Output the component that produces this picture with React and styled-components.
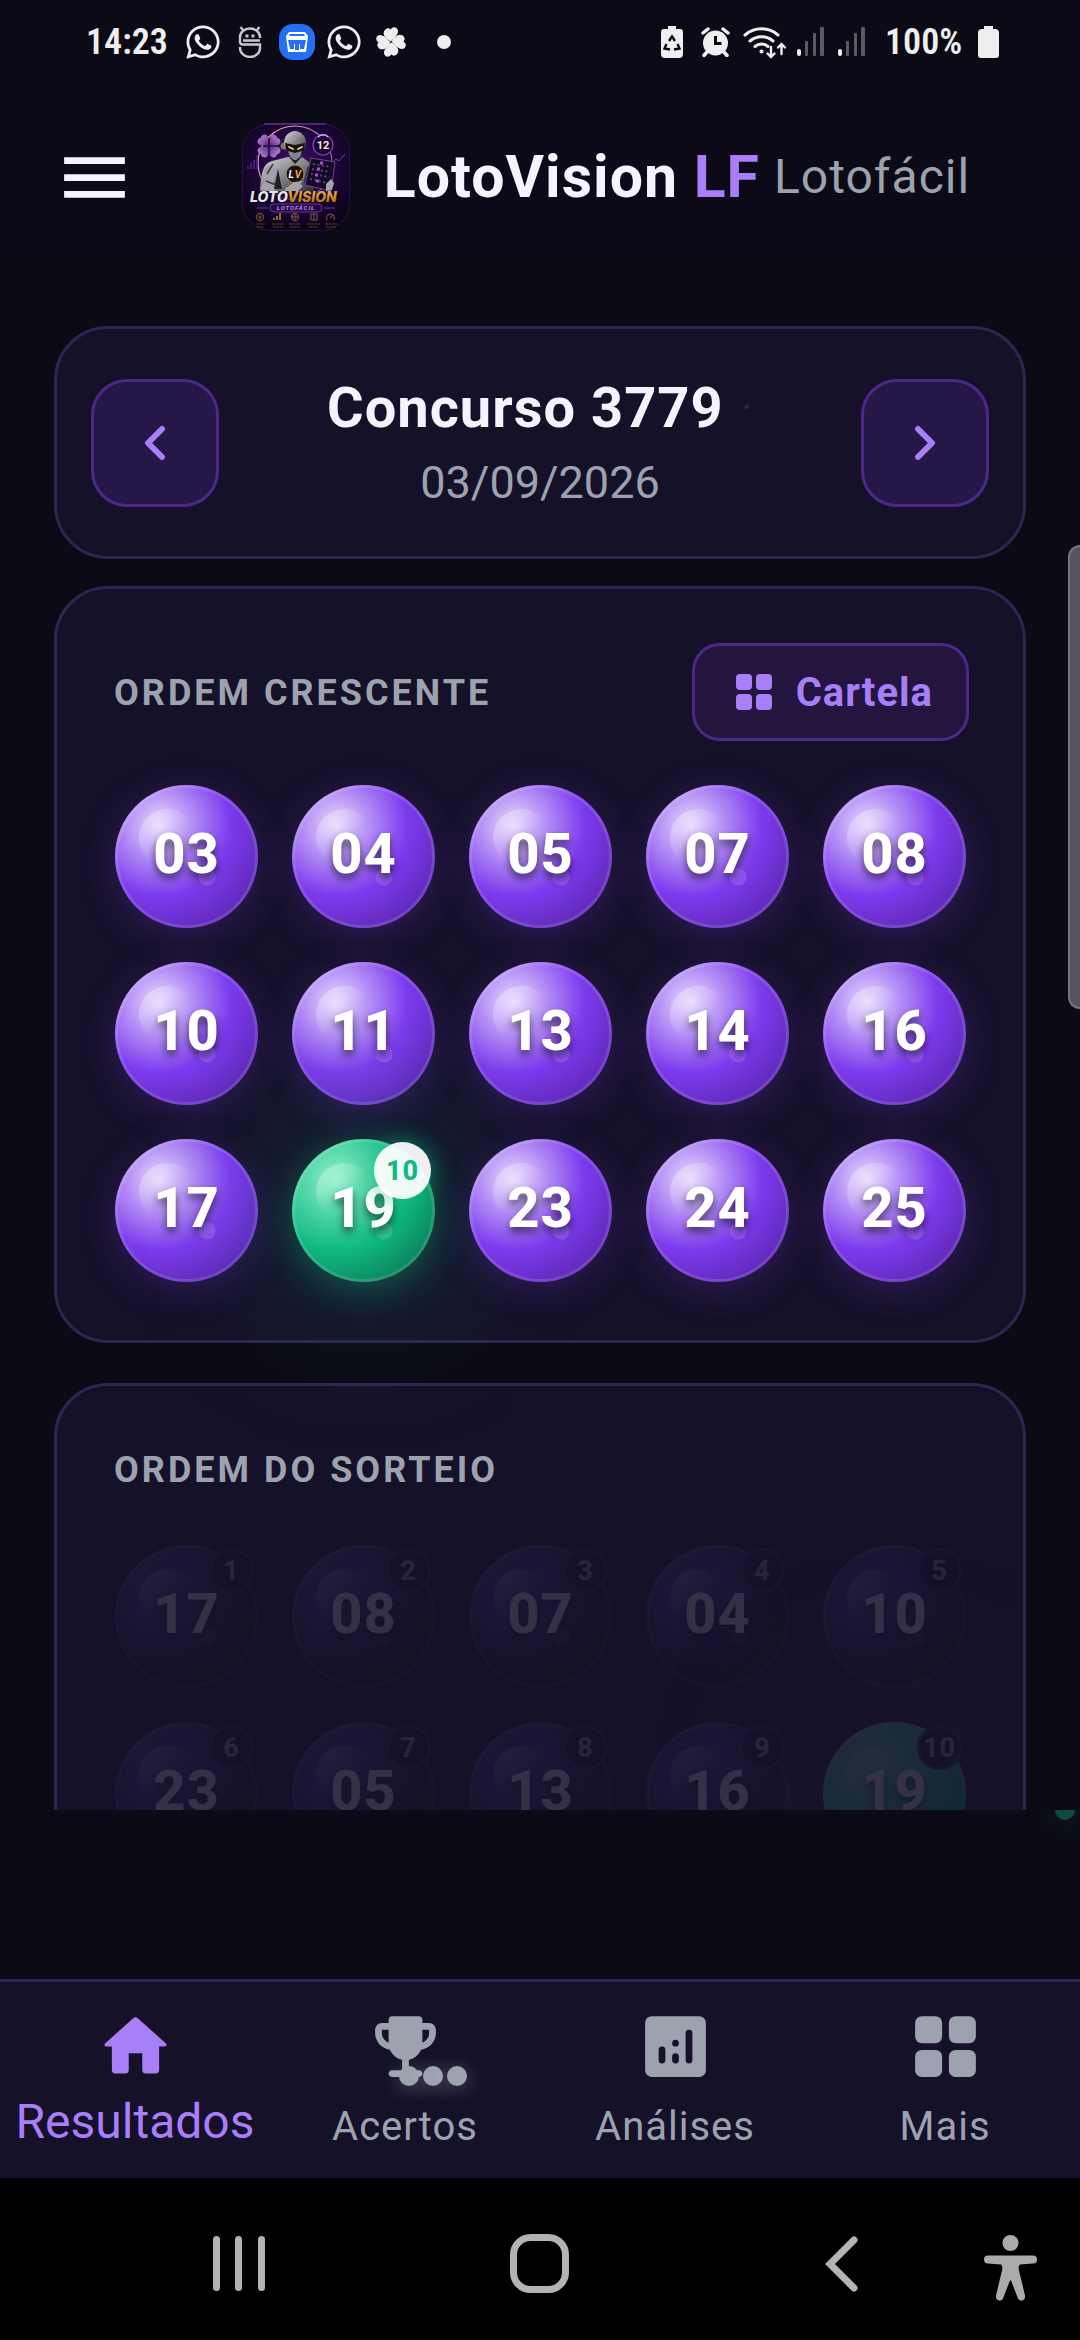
import React from "react";
import styled, { createGlobalStyle, css } from "styled-components";
import { FaWhatsapp } from "react-icons/fa";

const c = {
  bg: "#0c0a15",
  header: "#0d0a18",
  card: "#151129",
  line: "#2d2650",
  text: "#f5f3ff",
  muted: "#9ca3af",
  accent: "#a97ef9",
  accentLine: "#4c2889",
  status: "#eeeeee",
};

const Global = createGlobalStyle`
  *, *::before, *::after { box-sizing: border-box; }
  body { margin: 0; background: ${c.bg}; font-family: Roboto, "Liberation Sans", sans-serif; }
  button { font: inherit; padding: 0; border: 0; background: none; cursor: pointer; }
  svg { display: block; flex: none; }
  h1, h2, p { margin: 0; }
`;

const Shell = styled.div`
  display: flex;
  flex-direction: column;
  height: 100vh;
  overflow: hidden;
  background: ${c.bg};
`;

/* ---------- status bar ---------- */
const StatusBar = styled.div`
  display: flex;
  justify-content: space-between;
  align-items: center;
  height: 83px;
  flex: none;
  padding: 0 81px 0 86px;
  background: ${c.header};
  color: ${c.status};
`;
const StatusGroup = styled.div`
  display: flex;
  align-items: center;
`;
const StatusCell = styled.span`
  display: grid;
  place-items: center;
  width: ${(p) => p.$width}px;
`;
const StatusText = styled.span`
  width: 93px;
  font-family: "Roboto Condensed", Roboto, sans-serif;
  font-weight: 600;
  font-size: 36px;
  line-height: 48px;
`;
const BatteryText = styled(StatusText)`
  margin-left: 13px;
`;

/* ---------- header ---------- */
const Header = styled.header`
  display: flex;
  align-items: center;
  height: 175px;
  flex: none;
  padding: 13px 54px 0;
  background: ${c.header};
`;
const MenuButton = styled.button`
  display: grid;
  place-items: center;
  width: 81px;
  height: 81px;
  color: ${c.text};
`;
const Brand = styled.div`
  display: flex;
  flex: 1;
  align-items: center;
  justify-content: center;
  padding-left: 51px;
`;
const BrandName = styled.h1`
  margin-left: 34px;
  font-size: 59px;
  line-height: 70px;
  font-weight: 700;
  letter-spacing: 1px;
  color: ${c.text};
  white-space: nowrap;
`;
const BrandMark = styled.span`
  color: ${c.accent};
`;
const BrandSub = styled.span`
  margin-left: 14px;
  font-size: 48px;
  line-height: 56px;
  letter-spacing: 1px;
  color: ${c.muted};
`;

/* ---------- content ---------- */
const Main = styled.main`
  flex: 1;
  min-height: 0;
  overflow: hidden;
  padding: 68px 54px 0;
`;
const Card = styled.section`
  border: 3px solid ${c.line};
  border-radius: 54px;
  background: ${c.card};
`;
const DrawCard = styled(Card)`
  display: flex;
  align-items: center;
  justify-content: space-between;
  height: 233px;
  padding: 0 34px;
`;
const ArrowButton = styled.button`
  display: grid;
  place-items: center;
  width: 128px;
  height: 128px;
  border: 3px solid ${c.accentLine};
  border-radius: 36px;
  background: #251747;
  color: ${c.accent};
`;
const DrawInfo = styled.div`
  display: flex;
  flex-direction: column;
  align-items: center;
  gap: 9px;
  padding-top: 6px;
`;
const DrawTitle = styled.h2`
  display: flex;
  align-items: center;
  gap: 18px;
  font-size: 56px;
  line-height: 66px;
  font-weight: 700;
  letter-spacing: 1px;
  color: ${c.text};
`;
const Separator = styled.span`
  font-size: 40px;
  font-weight: 400;
  color: ${c.line};
`;
const DrawDate = styled.p`
  font-size: 45px;
  line-height: 66px;
  color: ${c.muted};
`;
const BallCard = styled(Card)`
  margin-top: ${(p) => p.$top}px;
  padding: 54px 54px 58px;
`;
const CardHead = styled.div`
  display: flex;
  align-items: center;
  justify-content: space-between;
  min-height: ${(p) => p.$height}px;
`;
const CardTitle = styled.h2`
  padding: 2px 0 0 3px;
  font-size: 36px;
  line-height: 56px;
  font-weight: 700;
  letter-spacing: 3px;
  color: ${c.muted};
`;
const CardButton = styled.button`
  display: flex;
  align-items: center;
  gap: 18px;
  height: 98px;
  padding: 0 33px 0 35px;
  border: 3px solid ${c.accentLine};
  border-radius: 28px;
  background: #23153e;
  color: ${c.accent};
  font-size: 40px;
  font-weight: 700;
  letter-spacing: 1px;
`;
const BallGrid = styled.div`
  display: grid;
  grid-template-columns: repeat(5, 143px);
  justify-content: space-between;
  row-gap: 34px;
  margin-top: ${(p) => p.$top}px;
  padding: 0 3px 0 4px;
`;

const tones = {
  purple: css`
    background: radial-gradient(circle at 31% 28%, #e6d9fd 0%, #7c3aed 50%, #4c1d95 100%);
    box-shadow: 0 8px 36px rgba(124, 58, 237, 0.26);
  `,
  green: css`
    background: radial-gradient(circle at 31% 28%, #8df0ca 0%, #10b981 50%, #065f46 100%);
    box-shadow: 0 8px 36px rgba(16, 185, 129, 0.36), 0 0 170px rgba(16, 185, 129, 0.34);
  `,
  idle: css`
    background: radial-gradient(circle at 32% 28%, #54408c 0%, #4b3085 25%, #1c111a 65%);
  `,
  idleGreen: css`
    background: radial-gradient(circle at 32% 28%, #6ee7b7 0%, #10b981 70%);
    box-shadow: 0 0 150px rgba(90, 140, 110, 0.5);
  `,
};
const BallShape = styled.div`
  position: relative;
  display: grid;
  place-items: center;
  height: 143px;
  border-radius: 50%;
  padding-bottom: 6px;
  opacity: ${(p) => (p.$dim ? 0.13 : 1)};
  color: #fff;
  font-size: 56px;
  line-height: 66px;
  font-weight: 800;
  letter-spacing: 1px;
  text-shadow: 0 5px 8px rgba(0, 0, 0, 0.6);
  ${(p) => tones[p.$tone]}

  &::before {
    content: "";
    position: absolute;
    inset: 0;
    border-radius: 50%;
    border: 3px solid rgba(255, 255, 255, 0.13);
    background:
      radial-gradient(circle at 92px 92px, rgba(255, 255, 255, 0.14) 8px, transparent 9px);
    background-origin: border-box;
  }
  &::after {
    content: "";
    position: absolute;
    left: 17%;
    top: 17%;
    width: 57px;
    height: 57px;
    border-radius: 50%;
    background: linear-gradient(135deg, rgba(255, 255, 255, 0.34) 10%, transparent 55%);
  }
`;
const BallNumber = styled.span`
  position: relative;
  z-index: 1;
`;
const BallBadge = styled.span`
  position: absolute;
  z-index: 2;
  top: 3px;
  right: 4px;
  display: grid;
  place-items: center;
  width: ${(p) => (p.$dim ? 45 : 57)}px;
  height: ${(p) => (p.$dim ? 45 : 57)}px;
  border-radius: 50%;
  font-size: 27px;
  line-height: 32px;
  text-shadow: none;
  ${(p) =>
    p.$dim
      ? css`
          border: 3px solid #3a2f5c;
          background: #151129;
          color: #a9a4b8;
        `
      : css`
          background: rgba(255, 255, 255, 0.93);
          color: #10b981;
          box-shadow: 0 0 24px rgba(16, 185, 129, 0.6);
        `}
`;
const ScrollThumb = styled.div`
  position: absolute;
  top: 545px;
  right: 0;
  width: 12px;
  height: 464px;
  border: 2px solid #77757d;
  border-right: 0;
  border-radius: 12px 0 0 12px;
  background: #55535c;
`;
const Gap = styled.div`
  position: relative;
  flex: none;
  height: 169px;
  overflow: hidden;
`;
const Pulse = styled.span`
  position: absolute;
  top: -10px;
  right: 5px;
  width: 20px;
  height: 20px;
  border-radius: 50%;
  background: #0f4a3d;
  box-shadow: 0 0 30px 4px rgba(16, 185, 129, 0.15);
`;

/* ---------- tab bar ---------- */
const TabBar = styled.nav`
  display: grid;
  grid-template-columns: repeat(4, 1fr);
  flex: none;
  height: 199px;
  border-top: 3px solid ${c.line};
  background: ${c.card};
`;
const Tab = styled.button`
  display: flex;
  flex-direction: column;
  align-items: center;
  padding-top: 24px;
  gap: 7px;
  color: ${(p) => (p.$active ? c.accent : c.muted)};
`;
const TabIcon = styled.span`
  position: relative;
`;
const TabLabel = styled.span`
  font-size: ${(p) => (p.$active ? 48 : 40)}px;
  line-height: ${(p) => (p.$active ? 56 : 66)}px;
  letter-spacing: ${(p) => (p.$active ? 0 : 1)}px;
`;
const Dots = styled.span`
  position: absolute;
  left: 34px;
  top: 60px;
  display: flex;
  gap: 4px;
`;
const Dot = styled.span`
  width: 20px;
  height: 20px;
  border-radius: 50%;
  background: ${c.muted};
  box-shadow: 0 3px 20px rgba(255, 255, 255, 0.28);
`;

/* ---------- system navigation ---------- */
const SystemBar = styled.div`
  display: grid;
  grid-template-columns: 88px 1fr 1fr 1fr 88px;
  align-items: center;
  justify-items: center;
  flex: none;
  height: 162px;
  padding-top: 9px;
  background: #000;
  color: #b3b3b3;
`;
const SystemButton = styled.button`
  color: inherit;
`;
const AccessButton = styled(SystemButton)`
  justify-self: end;
  margin: 8px 43px 0 0;
`;

/* ---------- drawings ---------- */
const Whats = () => <FaWhatsapp size={38} />;

const DroidIcon = () => (
  <svg width="24" height="32" viewBox="0 0 24 32" fill="none" stroke="#c9c9cc" strokeWidth="2.4">
    <path d="M2 14.5V11a10 8.5 0 0 1 20 0v1M2 14.5V16a3 3 0 0 0 3 2.500h17V22a10 9 0 0 1-20 0v-1M5 14.500h17M5 4 2.500 1M19 4l2.500-3" />
    <path d="M9 8.500v3M15 8.500v3" strokeWidth="3" />
  </svg>
);
const BasketIcon = () => (
  <svg width="36" height="36" viewBox="0 0 36 36">
    <rect width="36" height="36" rx="14" fill="#2370f6" />
    <path d="M10 8h16l3 4-2 16H9L7 12z" fill="#fff" />
    <path d="M11 10h14l1 2H10zM9 16h5v3h1v6h-4zM27 16h-5v3h-1v6h4z" fill="#2370f6" />
    <path d="M14 16h8v4h-2v6h-4v-6h-2z" fill="#2370f6" />
    <path d="M10 14h16v2H10z" fill="#fff" />
  </svg>
);
const leaf = "M16.500 16.500C11 15 6 11 8.500 6.500c1.500-2.500 4-3 5.500-1.500 1-3 4-4 6-2.500 4 3 .5 9-3.500 14z";
const CloverIcon = () => (
  <svg width="34" height="34" viewBox="0 0 34 34" fill="currentColor">
    {[12, 102, 192, 282].map((r) => (
      <path key={r} d={leaf} transform={`rotate(${r} 17 17)`} />
    ))}
  </svg>
);
const DotIcon = () => (
  <svg width="14" height="14" viewBox="0 0 14 14" fill="currentColor">
    <circle cx="7" cy="7" r="7" />
  </svg>
);
const RecycleBattery = () => (
  <svg width="22" height="32" viewBox="0 0 22 32">
    <path d="M7 0h8v3h4a3 3 0 0 1 3 3v22a4 4 0 0 1-4 4H4a4 4 0 0 1-4-4V6a3 3 0 0 1 3-3h4z" fill="currentColor" />
    <path d="M8 15l3-4.500 3 4.500M16.500 18l2 4.500-5.500 1M9 23.500l-5.500-1 2-4.500" fill="none" stroke="#0d0a18" strokeWidth="2.400" />
  </svg>
);
const AlarmIcon = () => (
  <svg width="29" height="30" viewBox="0 0 29 30">
    <circle cx="14.500" cy="16" r="12.500" fill="currentColor" />
    <path d="M2 6l5-4M27 6l-5-4M6 25l-3 3.500M23 25l3 3.500" stroke="currentColor" strokeWidth="3.500" strokeLinecap="round" />
    <path d="M14.500 9v7.500h6" fill="none" stroke="#0d0a18" strokeWidth="3" />
  </svg>
);
const WifiIcon = () => (
  <svg width="44" height="34" viewBox="0 0 44 34" fill="none" stroke="currentColor" strokeWidth="3" strokeLinecap="round">
    <path d="M2 10a25 25 0 0 1 33 0M7 16a18 18 0 0 1 23 0M12 21.500a10 10 0 0 1 13 0" />
    <circle cx="18.500" cy="26.500" r="2" fill="currentColor" stroke="none" />
    <path d="M28 22v10M24.500 28.500 28 32l3.500-3.500M38.500 29V19M35 22.500l3.500-3.500 3.500 3.500" strokeWidth="2.400" />
  </svg>
);
const SignalIcon = () => (
  <svg width="27" height="32" viewBox="0 0 27 32" fill="#5b5963">
    <rect x="0" y="23" width="4" height="7" rx="2" fill="#eeeeee" />
    <rect x="8" y="15" width="3" height="15" rx="1" />
    <rect x="16" y="7" width="3" height="23" rx="1" />
    <rect x="23" y="1" width="4" height="29" rx="1" />
  </svg>
);
const BatteryIcon = () => (
  <svg width="21" height="32" viewBox="0 0 21 32" fill="currentColor">
    <path d="M6 0h9v3h2a4 4 0 0 1 4 4v22a3 3 0 0 1-3 3H3a3 3 0 0 1-3-3V7a4 4 0 0 1 4-4h2z" />
  </svg>
);
const MenuIcon = () => (
  <svg width="81" height="81" viewBox="0 0 24 24" fill="currentColor">
    <path d="M3 18h18v-2H3v2zm0-5h18v-2H3v2zm0-7v2h18V6H3z" />
  </svg>
);
const Chevron = ({ flip }) => (
  <svg width="22" height="36" viewBox="0 0 22 36" fill="none" stroke="currentColor" strokeWidth="6" strokeLinecap="round" strokeLinejoin="round">
    <path d={flip ? "M4 4l14 14L4 32" : "M18 4 4 18l14 14"} />
  </svg>
);
const GridIcon = ({ size }) => (
  <svg width={size} height={size} viewBox="0 0 24 24" fill="currentColor">
    {[3, 13].map((y) => [3, 13].map((x) => <rect key={`${x}-${y}`} x={x} y={y} width="8" height="8" rx="2" />))}
  </svg>
);
const HomeIcon = () => (
  <svg width="81" height="81" viewBox="0 0 24 24" fill="currentColor">
    <path d="M10 19v-5h4v5c0 .55.45 1 1 1h3c.55 0 1-.45 1-1v-7h1.700c.46 0 .68-.57.33-.87L12.670 3.600c-.38-.34-.96-.34-1.340 0l-8.360 7.530c-.34.3-.13.87.33.87H5v7c0 .55.45 1 1 1h3c.55 0 1-.45 1-1z" />
  </svg>
);
const TrophyIcon = () => (
  <svg width="81" height="81" viewBox="0 0 24 24" fill="currentColor">
    <path d="M19 5h-2V4c0-.55-.45-1-1-1H8c-.55 0-1 .45-1 1v1H5c-1.100 0-2 .9-2 2v1c0 2.550 1.920 4.630 4.390 4.940.63 1.500 1.980 2.630 3.610 2.960V19H8c-.55 0-1 .45-1 1s.45 1 1 1h8c.55 0 1-.45 1-1s-.45-1-1-1h-3v-3.100c1.630-.33 2.980-1.460 3.610-2.960C19.080 12.630 21 10.550 21 8V7c0-1.100-.9-2-2-2zM5 8V7h2v3.820C5.840 10.400 5 9.300 5 8zm14 0c0 1.300-.84 2.400-2 2.820V7h2v1z" />
  </svg>
);
const ChartIcon = () => (
  <svg width="81" height="81" viewBox="0 0 24 24" fill="currentColor">
    <rect x="3" y="3" width="18" height="18" rx="2" />
    <g fill="#151129">
      <rect x="7" y="12" width="2" height="5" rx="1" />
      <rect x="11" y="10" width="2" height="2" rx="1" />
      <rect x="11" y="14" width="2" height="3" rx="1" />
      <rect x="15" y="7" width="2" height="10" rx="1" />
    </g>
  </svg>
);
const RecentsIcon = () => (
  <svg width="52" height="55" viewBox="0 0 52 55" fill="currentColor">
    <rect x="0" width="7" height="55" rx="3.500" />
    <rect x="22" width="7" height="55" rx="3.500" />
    <rect x="45" width="7" height="55" rx="3.500" />
  </svg>
);
const CircleHomeIcon = () => (
  <svg width="59" height="59" viewBox="0 0 59 59" fill="none" stroke="currentColor" strokeWidth="7">
    <rect x="3.500" y="3.500" width="52" height="52" rx="17" />
  </svg>
);
const BackIcon = () => (
  <svg width="33" height="56" viewBox="0 0 33 56" fill="none" stroke="currentColor" strokeWidth="7" strokeLinecap="round">
    <path d="M29 4 5 28l24 24" />
  </svg>
);
const AccessIcon = () => (
  <svg width="53" height="66" viewBox="0 0 53 66" fill="#ababab">
    <circle cx="26.500" cy="8" r="8" />
    <path d="M4 20.500h45a4 4 0 0 1 0 8l-13 1c-2 2-1.500 5 0 10l5 21c1 5-5 7-7 3l-7-18h-1l-7 18c-2 4-8 2-7-3l5-21c1.500-5 2-8 0-10l-13-1a4 4 0 0 1 0-8z" />
  </svg>
);

const lobe = "M-.8-.8V-7.500c0-3.500-3.500-5-6-3-1 .8-1.200 2-1.200 2.500-1 0-2 .4-2.800 1.500C-12.500-4-11-.8-7.500-.8z";
const Logo = () => (
  <svg width="108" height="108" viewBox="0 0 108 108" role="img" aria-label="LotoVision Lotofácil">
    <defs>
      <radialGradient id="logoBg" cx=".5" cy=".4" r=".65">
        <stop offset="0" stopColor="#3a0f63" />
        <stop offset=".6" stopColor="#1c0637" />
        <stop offset="1" stopColor="#0b0317" />
      </radialGradient>
      <linearGradient id="steel" x1="0" y1="0" x2="1" y2="1">
        <stop offset="0" stopColor="#d8d8da" />
        <stop offset=".5" stopColor="#85858a" />
        <stop offset="1" stopColor="#2c2b31" />
      </linearGradient>
      <linearGradient id="gold" x1="0" y1="0" x2="0" y2="1">
        <stop offset="0" stopColor="#f6bc4c" />
        <stop offset="1" stopColor="#a96510" />
      </linearGradient>
      <linearGradient id="lilac" x1="0" y1="0" x2="1" y2="1">
        <stop offset="0" stopColor="#c79ce0" />
        <stop offset="1" stopColor="#5c2b85" />
      </linearGradient>
      <linearGradient id="arc" x1="0" y1="0" x2="1" y2="1">
        <stop offset="0" stopColor="#f0c890" />
        <stop offset="1" stopColor="#7e2cc4" />
      </linearGradient>
    </defs>
    <rect x=".5" y=".5" width="107" height="107" rx="28" fill="url(#logoBg)" stroke="#2a1048" />
    <path d="M22 1h62" stroke="#7d3fb0" />
    <circle cx="53" cy="40" r="37" fill="none" stroke="url(#arc)" strokeWidth="1.200" />
    <path d="M6 46v-3M9 46v-6M12 46v-9M15 46V32" stroke="#55218a" strokeWidth="1.500" />
    <path d="M90 40l4-4 3 2 6-7" fill="none" stroke="#7c3ab3" />
    <g fill="url(#lilac)">
      {[0, 90, 180, 270].map((r) => (
        <path key={r} d={lobe} transform={`translate(27 23) rotate(${r})`} />
      ))}
    </g>
    <circle cx="81" cy="22" r="10" fill="#1b0533" stroke="#9142cf" strokeWidth="1.200" />
    <path d="M76 14c3-3 8-3 10 0" fill="none" stroke="#d7a0ff" strokeWidth="1.500" />
    <text x="81" y="26" fontSize="11" fontWeight="700" textAnchor="middle" fill="#f4ead8">12</text>
    <path d="M18 68c1-16 2-27 12-30l16-4h14l8 6c5 5 5 16 4 28z" fill="url(#steel)" />
    <path d="M27 42c-6 3-6 10-4 16l8 2 4-14zM18 66l5-8 12 5-4 6z" fill="#a2a2a8" />
    <path d="M36 46l-4 20h8zM46 33l7 8 8-8-2-5H47zM66 42l-4 18 8-3z" fill="#211e28" />
    <path d="M24 58l10 4M31 41l-6 10" stroke="#3a3840" strokeWidth="1.500" />
    <circle cx="42" cy="23" r="3.500" fill="#8a7352" />
    <ellipse cx="53" cy="20" rx="11" ry="12" fill="url(#steel)" />
    <path d="M43 20c3 1 7 1 10 2 3-1 7-1 10-2l-1 7-4 5H48l-4-5z" fill="#15131a" />
    <path d="M46 28l7 2 7-2-2 6-4 3h-2l-4-3z" fill="#7f8290" />
    <path d="M47 24l4 2M60 24l-4 2" stroke="#ffcf72" strokeWidth="1.800" strokeLinecap="round" />
    <path d="M69 35l24 4-4 29-26-6z" fill="#150a24" stroke="#69458f" />
    <path d="M71 41l18 3M70 46l18 3M69 51l18 3M68 56l18 4" stroke="#5c4d78" strokeWidth="1.800" strokeDasharray="2 2.500" />
    <path d="M78 40h3M75 46h3M73 52h3M74 58h3" stroke="#ad4be8" strokeWidth="3" />
    <circle cx="53" cy="51" r="9" fill="#15121b" stroke="#b48a45" />
    <text x="49" y="55" fontSize="10" fontWeight="700" fontStyle="italic" textAnchor="middle" fill="#fff">L</text>
    <text x="56" y="55" fontSize="10" fontWeight="700" fontStyle="italic" textAnchor="middle" fill="#f0a92e">V</text>
    <path d="M43 66l9-7 9-1-3 3 3 2-5 5H43zM84 61l5-5 3 4-2 7-6 1z" fill="#a5a4aa" />
    <path d="M9 69h90v11H9z" fill="#0d0417" opacity=".6" />
    <text x="8" y="79" fontFamily="Inter, Roboto, sans-serif" fontSize="14" fontWeight="800" fontStyle="italic" fill="#e6e4e8">
      LOTO<tspan fill="url(#gold)">VISION</tspan>
    </text>
    <rect x="28" y="81" width="52" height="8" rx="4" fill="#22083e" stroke="#6e32a0" />
    <path d="M15 85h11M82 85h11" stroke="#6e32a0" />
    <text x="54" y="87" fontSize="6" fontWeight="700" fontStyle="italic" letterSpacing="1" textAnchor="middle" fill="#c98cf5">LOTOFÁCIL</text>
    <g fill="none" stroke="#8c6634" strokeWidth="1.300" opacity=".7">
      <circle cx="18" cy="94" r="3.500" />
      <circle cx="18" cy="94" r="1" />
      <path d="M32 97v-2M35 97v-4M38 97v-7" stroke="#d08f35" strokeWidth="2" />
      <circle cx="53" cy="94" r="3.500" />
      <path d="M50 94h6M53 91v6" />
      <rect x="69" y="91" width="6" height="6" />
      <path d="M72 91v6" />
      <path d="M85 97a4 4 0 1 1 7 0M88 95l3-3" />
      <path d="M14 101h9M30 101h12M47 101h12M65 101h13M83 101h12M15 104h7M31 104h10M48 104h10M67 104h9M84 104h10" strokeDasharray="3 .6" opacity=".6" />
    </g>
  </svg>
);

/* ---------- data ---------- */
const ascending = ["03", "04", "05", "07", "08", "10", "11", "13", "14", "16", "17", "19", "23", "24", "25"];
const drawn = ["17", "08", "07", "04", "10", "23", "05", "13", "16", "19"];
const LUCKY = "19";

const Ball = ({ value, badge, dim }) => {
  const lucky = value === LUCKY;
  const tone = dim ? (lucky ? "idleGreen" : "idle") : lucky ? "green" : "purple";
  return (
    <BallShape $tone={tone} $dim={dim}>
      <BallNumber>{value}</BallNumber>
      {badge && <BallBadge $dim={dim}>{badge}</BallBadge>}
    </BallShape>
  );
};

const notifications = [
  { icon: <Whats />, width: 47 },
  { icon: <DroidIcon />, width: 47 },
  { icon: <BasketIcon />, width: 47 },
  { icon: <Whats />, width: 47 },
  { icon: <CloverIcon />, width: 47 },
  { icon: <DotIcon />, width: 60 },
];
const indicators = [
  { icon: <RecycleBattery />, width: 37 },
  { icon: <AlarmIcon />, width: 50 },
  { icon: <WifiIcon />, width: 50 },
  { icon: <SignalIcon />, width: 41 },
  { icon: <SignalIcon />, width: 41 },
];
const tabs = [
  { label: "Resultados", icon: <HomeIcon />, active: true },
  { label: "Acertos", icon: <TrophyIcon />, loading: true },
  { label: "Análises", icon: <ChartIcon /> },
  { label: "Mais", icon: <GridIcon size={81} /> },
];

export default function App() {
  return (
    <>
      <Global />
      <Shell>
        <StatusBar>
          <StatusGroup>
            <StatusText>14:23</StatusText>
            {notifications.map((n, i) => (
              <StatusCell key={i} $width={n.width}>
                {n.icon}
              </StatusCell>
            ))}
          </StatusGroup>
          <StatusGroup>
            {indicators.map((n, i) => (
              <StatusCell key={i} $width={n.width}>
                {n.icon}
              </StatusCell>
            ))}
            <BatteryText>100%</BatteryText>
            <BatteryIcon />
          </StatusGroup>
        </StatusBar>

        <Header>
          <MenuButton aria-label="Menu">
            <MenuIcon />
          </MenuButton>
          <Brand>
            <Logo />
            <BrandName>
              LotoVision <BrandMark>LF</BrandMark>
            </BrandName>
            <BrandSub>Lotofácil</BrandSub>
          </Brand>
        </Header>

        <Main>
          <DrawCard>
            <ArrowButton aria-label="Concurso anterior">
              <Chevron />
            </ArrowButton>
            <DrawInfo>
              <DrawTitle>
                Concurso 3779 <Separator>·</Separator>
              </DrawTitle>
              <DrawDate>03/09/2026</DrawDate>
            </DrawInfo>
            <ArrowButton aria-label="Próximo concurso">
              <Chevron flip />
            </ArrowButton>
          </DrawCard>

          <BallCard $top={27}>
            <CardHead $height={98}>
              <CardTitle>ORDEM CRESCENTE</CardTitle>
              <CardButton>
                <GridIcon size={48} />
                Cartela
              </CardButton>
            </CardHead>
            <BallGrid $top={44}>
              {ascending.map((n) => (
                <Ball key={n} value={n} badge={n === LUCKY ? "10" : null} />
              ))}
            </BallGrid>
          </BallCard>

          <BallCard $top={40}>
            <CardHead $height={58}>
              <CardTitle>ORDEM DO SORTEIO</CardTitle>
            </CardHead>
            <BallGrid $top={47}>
              {drawn.map((n, i) => (
                <Ball key={n} value={n} badge={String(i + 1)} dim />
              ))}
            </BallGrid>
          </BallCard>
        </Main>
        <ScrollThumb />
        <Gap>
          <Pulse />
        </Gap>

        <TabBar>
          {tabs.map((t) => (
            <Tab key={t.label} $active={t.active}>
              <TabIcon>
                {t.icon}
                {t.loading && (
                  <Dots>
                    <Dot />
                    <Dot />
                    <Dot />
                  </Dots>
                )}
              </TabIcon>
              <TabLabel $active={t.active}>{t.label}</TabLabel>
            </Tab>
          ))}
        </TabBar>

        <SystemBar>
          <span />
          <SystemButton aria-label="Recentes">
            <RecentsIcon />
          </SystemButton>
          <SystemButton aria-label="Início">
            <CircleHomeIcon />
          </SystemButton>
          <SystemButton aria-label="Voltar">
            <BackIcon />
          </SystemButton>
          <AccessButton aria-label="Acessibilidade">
            <AccessIcon />
          </AccessButton>
        </SystemBar>
      </Shell>
    </>
  );
}
